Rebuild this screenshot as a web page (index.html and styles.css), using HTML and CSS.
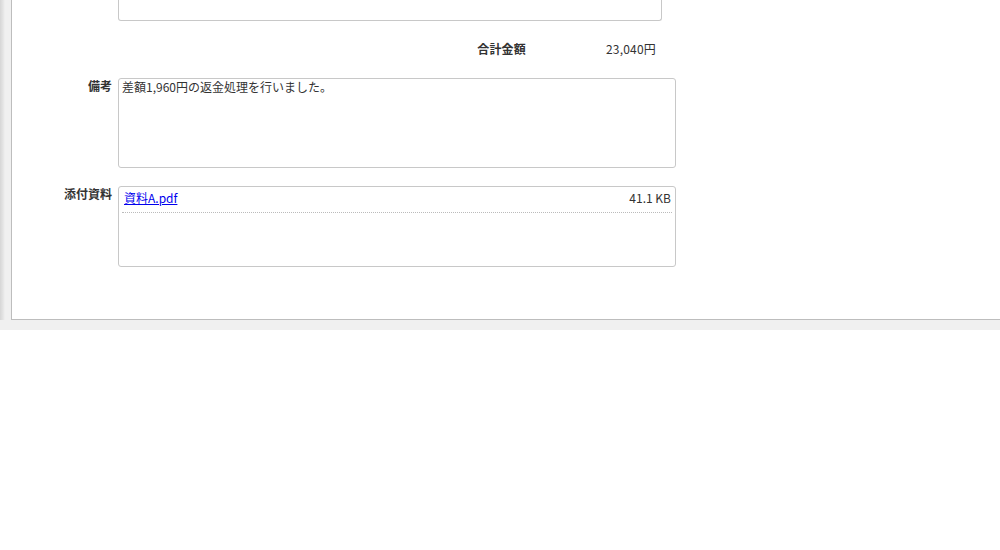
FILE: index.html
```html
<!DOCTYPE html>
<html lang="ja">
<head>
<meta charset="utf-8">
<title>返金処理</title>
<link rel="stylesheet" href="styles.css">
</head>
<body>
<div class="frame">
  <div class="strip"></div>
  <div class="panel">
    <div class="form">
      <div class="row">
        <div class="label"></div>
        <div class="cut-box"></div>
      </div>
      <div class="row">
        <div class="label"></div>
        <div class="total">
          <span class="total-label">合計金額</span>
          <span class="total-value">23,040円</span>
        </div>
      </div>
      <div class="row">
        <div class="label">備考</div>
        <div class="note-box">差額1,960円の返金処理を行いました。</div>
      </div>
      <div class="row row-file">
        <div class="label">添付資料</div>
        <div class="file-box">
          <div class="file-row">
            <a href="#" class="file-link">資料A.pdf</a>
            <span class="file-size">41.1 KB</span>
          </div>
        </div>
      </div>
    </div>
  </div>
</div>
<div class="bottom-band"></div>
</body>
</html>
```

FILE: styles.css
```css
* { box-sizing: border-box; }
html, body {
  margin: 0;
  padding: 0;
  background: #ffffff;
  font-family: "Noto Sans CJK JP", "Noto Sans", sans-serif;
  font-size: 12px;
  color: #333333;
}
.frame {
  display: flex;
  height: 320px;
  background: #f0f0f0;
}
.strip {
  width: 11px;
  flex: none;
  background: linear-gradient(to right, #d6d6d6 0px, #e4e4e4 3px, #f0f0f0 5px, #f0f0f0 11px);
}
.panel {
  flex: 1;
  background: #ffffff;
  border-left: 1px solid #bdbdbd;
  border-bottom: 1px solid #bdbdbd;
}
.bottom-band {
  height: 10px;
  background: #f0f0f0;
}
.form {
  display: flex;
  flex-direction: column;
}
.row {
  display: grid;
  grid-template-columns: 100px 558px;
  column-gap: 6px;
  align-items: start;
}
.label {
  text-align: right;
  font-weight: bold;
  line-height: 16px;
  color: #333333;
}
.cut-box {
  width: 544px;
  height: 21px;
  border: 1px solid #c8c8c8;
  border-top: none;
  border-radius: 0 0 3px 3px;
}
.total {
  width: 544px;
  display: flex;
  justify-content: flex-end;
  align-items: center;
  height: 18px;
  margin: 19px 0 20px;
  padding-right: 6px;
  line-height: 18px;
  letter-spacing: 0.2px;
}
.total-label {
  font-weight: bold;
}
.total-value {
  width: 130px;
  text-align: right;
}
.note-box {
  height: 90px;
  border: 1px solid #c8c8c8;
  border-radius: 3px;
  padding: 0 3px;
  line-height: 16px;
}
.row-file {
  margin-top: 18px;
}
.file-box {
  height: 81px;
  border: 1px solid #c8c8c8;
  border-radius: 3px;
  padding: 0 3px;
}
.file-row {
  display: flex;
  justify-content: space-between;
  align-items: flex-start;
  height: 26px;
  padding: 3px 1px 0 2px;
  border-bottom: 1px dotted #bbbbbb;
  line-height: 16px;
}
.file-link {
  color: #0000ee;
  text-decoration: underline;
}
.file-size {
  color: #333333;
}
```
